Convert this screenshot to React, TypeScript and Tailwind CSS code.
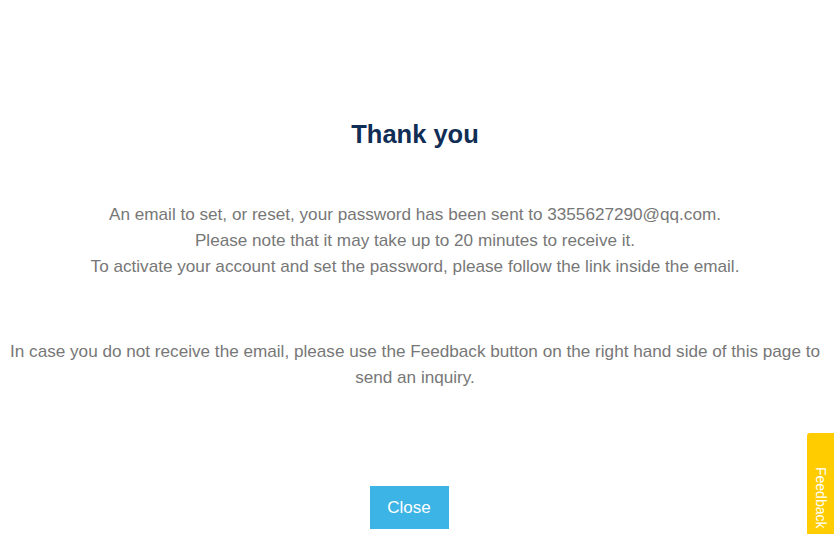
export default function App() {
  return (
    <div className="relative h-[534px] w-[834px] overflow-hidden bg-white font-['Liberation_Sans',Arial,sans-serif]">
      <div className="flex flex-col items-center pl-[8px] pr-[12px] pt-[118px] text-center">
        <h1 className="text-[25.5px] font-bold leading-[32px] text-[#0f2d55]">Thank you</h1>
        <div className="mt-[51px] text-[17.15px] leading-[26px] text-[#777]">
          <p>An email to set, or reset, your password has been sent to 3355627290@qq.com.</p>
          <p>Please note that it may take up to 20 minutes to receive it.</p>
          <p>To activate your account and set the password, please follow the link inside the email.</p>
        </div>
        <p className="mt-[59px] text-[17.15px] leading-[26px] text-[#777]">
          In case you do not receive the email, please use the Feedback button on the right hand side of this page to send an inquiry.
        </p>
        <button className="mt-[96px] h-[43px] w-[79px] -translate-x-[6px] bg-[#3cb4e5] text-[17px] text-white">
          Close
        </button>
      </div>
      <div className="absolute right-0 top-[433px] flex h-[110px] w-[27px] items-start justify-center rounded-tl-[3px] bg-[#ffcc00] pt-[34px]">
        <span className="text-[14px] leading-none text-white [writing-mode:vertical-rl]">Feedback</span>
      </div>
    </div>
  )
}
